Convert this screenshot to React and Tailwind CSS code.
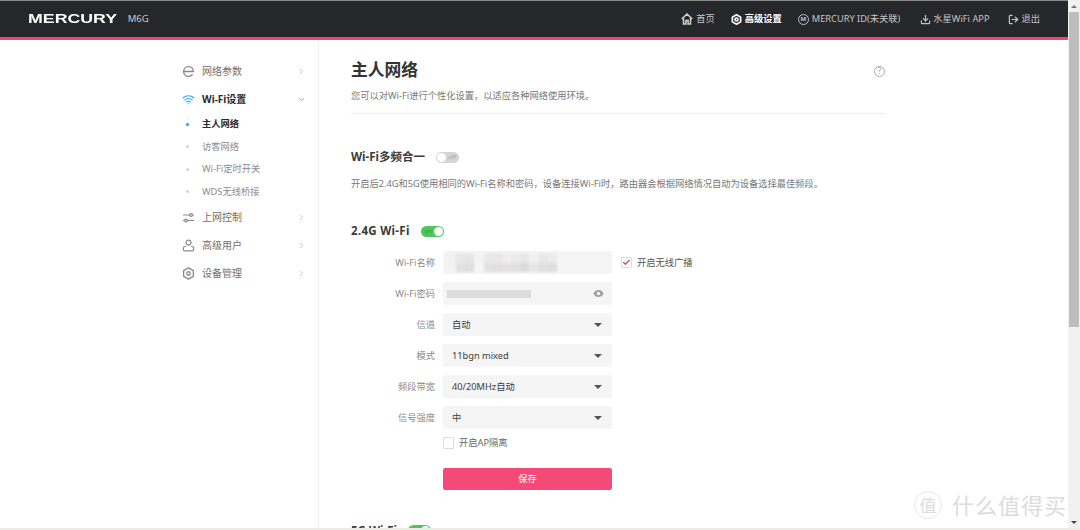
import React from 'react';
import { ChevronRight, ChevronDown, Wifi, Download, LogOut, Check } from 'lucide-react';

const font = { fontFamily: '"Noto Sans", "Noto Sans CJK SC", sans-serif' };

const E = () => (
  <svg width="13" height="13" viewBox="0 0 12 12" fill="none" stroke="#8a8a8a" strokeWidth="1.2">
    <path d="M1.5 6h9c0-2.6-2-4.5-4.5-4.5S1.5 3.4 1.5 6s2 4.5 4.5 4.5c1.6 0 3-.7 3.8-1.9" />
  </svg>
);

const Gear = ({ color = '#8a8a8a', size = 13, width = 1.2 }) => (
  <svg width={size} height={size} viewBox="0 0 12 12" fill="none" stroke={color} strokeWidth={width}>
    <path d="M6 .8 10.5 3.4v5.2L6 11.2 1.5 8.6V3.4z" strokeLinejoin="round" />
    <circle cx="6" cy="6" r="1.6" />
  </svg>
);

const Sliders = () => (
  <svg width="13" height="13" viewBox="0 0 13 13" fill="none" stroke="#8a8a8a" strokeWidth="1.2">
    <path d="M1 4h6.5M10.5 4H12M1 9.5h1.5M5.5 9.5H12" />
    <circle cx="9" cy="4" r="1.4" />
    <circle cx="4" cy="9.5" r="1.4" />
  </svg>
);

const Person = () => (
  <svg width="13" height="13" viewBox="0 0 13 13" fill="none" stroke="#8a8a8a" strokeWidth="1.2">
    <circle cx="6.5" cy="3.6" r="2.5" />
    <path d="M4 7.5H3a1.6 1.6 0 0 0-1.6 1.6v1.4c0 .8.6 1.4 1.4 1.4h7.4c.8 0 1.4-.6 1.4-1.4V9.1A1.6 1.6 0 0 0 10 7.5H9" />
  </svg>
);

const HomeIcon = () => (
  <svg width="12" height="12" viewBox="0 0 12 12" fill="none" stroke="#d0d0d0" strokeWidth="1.5" className="mr-[3px]">
    <path d="M.8 6 6 1l5.2 5M2.5 5.2v5.8h2.4V7.6h2.2V11h2.4V5.2" />
  </svg>
);

const NavItem = ({ icon, label, active, open }) => (
  <div className="flex h-[28px] items-center">
    <div className="flex w-[20px] shrink-0 items-center">{icon}</div>
    <span className={active ? 'flex-1 text-[10px] font-bold text-[#2b2b2b]' : 'flex-1 text-[10px] text-[#6f6f6f]'}>{label}</span>
    {open ? <ChevronDown size={9} color="#8a8a8a" /> : <ChevronRight size={9} color="#b5b5b5" />}
  </div>
);

const SubItem = ({ label, active }) => (
  <div className="flex h-[22.5px] items-center">
    <div className="flex w-[20px] shrink-0 pl-[4px]">
      <span className={active ? 'h-[3px] w-[3px] rounded-full bg-[#1e9bf0]' : 'h-[3px] w-[3px] rounded-full bg-[#cfcfcf]'} />
    </div>
    <span className={active ? 'text-[9.25px] font-bold text-[#2b2b2b]' : 'text-[9.25px] text-[#8c8c8c]'}>{label}</span>
  </div>
);

const Row = ({ label, children, side }) => (
  <div className="flex h-[23px] items-center">
    <div className="w-[84px] shrink-0 text-right text-[9.25px] text-[#8a8a8a]">{label}</div>
    <div className="ml-[8px] flex h-[23px] w-[169px] shrink-0 items-center justify-between rounded-[2px] bg-[#f5f5f5] px-[9px] text-[9.25px] text-[#3c3c3c]">
      {children}
    </div>
    {side}
  </div>
);

const Caret = () => <span className="h-0 w-0 border-x-[4px] border-t-[4px] border-x-transparent border-t-[#555] mr-[1px]" />;

const Toggle = ({ on }) => (
  <div className={on ? 'flex h-[11px] w-[23px] items-center justify-between rounded-full bg-[#4fc45f] px-[1px] text-[6px] leading-none text-[#2f9a40]' : 'flex h-[11px] w-[23px] items-center justify-between rounded-full bg-[#d4d4d4] px-[1px] text-[6px] leading-none text-[#aaa]'}>
    {on ? <span className="pl-[3px]">on</span> : <span className="h-[9px] w-[9px] rounded-full bg-white" />}
    {on ? <span className="h-[9px] w-[9px] rounded-full bg-white" /> : <span className="pr-[2px]">off</span>}
  </div>
);

const Select = ({ label, value }) => (
  <Row label={label}>
    <span>{value}</span>
    <Caret />
  </Row>
);

const NameMosaic = () => (
  <div className="-ml-[5px] flex h-[19px] w-[110px] flex-wrap blur-[1px]">
    {['#f1f1f1', '#e8e8e8', '#e6e6e6', '#f3f3f3', '#e9e9e9', '#e8e8e8', '#eeeeee', '#eaeaea', '#e6e8ea', '#f0f0f0', '#e8e8e8', '#ececec',
      '#f3f3f3', '#e2e2e2', '#dedede', '#f5f5f5', '#e2e2e2', '#e0e0e0', '#e4e2de', '#e0e0e0', '#dcdcdc', '#e8e6e2', '#e0e0e0', '#dedede'].map((c, i) => (
      <span key={i} className="h-[9.5px] w-[9.16px]" style={{ backgroundColor: c }} />
    ))}
  </div>
);

export default function App() {
  return (
    <div className="relative flex h-[530px] w-[1080px] flex-col overflow-hidden bg-white" style={font}>
      <div className="flex min-h-0 flex-1">
        <div className="flex min-w-0 flex-1 flex-col">
          {/* top bar */}
          <header className="flex h-[40px] shrink-0 items-center border-t border-b-[3px] border-t-[#8a8a8a] border-b-[#f0476f] bg-[#26272b] pl-[28px] pr-[28px]">
            <span className="text-[12.5px] font-bold text-white" style={{ fontFamily: '"Liberation Sans", sans-serif', transform: 'scaleX(1.42)', transformOrigin: 'left' }}>MERCURY</span>
            <span className="ml-[37px] flex-1 text-[9.5px] text-[#c9c9c9]">M6G</span>
            <nav className="flex items-center text-[9.25px] text-[#c4c4c4]">
              <HomeIcon />
              <span>首页</span>
              <span className="ml-[16px] mr-[3px]"><Gear color="#fff" size={11} width={1.8} /></span>
              <span className="font-bold text-white">高级设置</span>
              <span className="ml-[16px] mr-[3px] flex h-[11px] w-[11px] items-center justify-center rounded-full border border-[#c4c4c4] text-[6px] font-bold leading-none">M</span>
              <span>MERCURY ID(未关联)</span>
              <Download size={11} strokeWidth={2.6} className="ml-[20px] mr-[2px]" />
              <span>水星WiFi APP</span>
              <LogOut size={11} strokeWidth={2.6} className="ml-[18px] mr-[3px]" />
              <span>退出</span>
            </nav>
          </header>

          <div className="flex min-h-0 flex-1">
            {/* left menu */}
            <aside className="w-[319px] shrink-0 border-r border-[#f1f1f1] pl-[182px] pr-[12px] pt-[17px]">
              <NavItem icon={<E />} label="网络参数" />
              <NavItem icon={<Wifi size={13} color="#2ea4f5" />} label="Wi-Fi设置" active open />
              <SubItem label="主人网络" active />
              <SubItem label="访客网络" />
              <SubItem label="Wi-Fi定时开关" />
              <SubItem label="WDS无线桥接" />
              <NavItem icon={<Sliders />} label="上网控制" />
              <NavItem icon={<Person />} label="高级用户" />
              <NavItem icon={<Gear />} label="设备管理" />
            </aside>

            {/* content */}
            <main className="min-w-0 flex-1 overflow-hidden pl-[32px]">
              <div className="w-[535px]">
                <div className="border-b border-[#f0f0f0] pb-[10px] pt-[18px]">
                  <div className="flex items-center justify-between">
                    <h1 className="text-[16.75px] font-bold leading-[24px] text-[#333]">主人网络</h1>
                    <span className="mr-[1px] mt-[2px] flex h-[11px] w-[11px] items-center justify-center rounded-full border border-[#aaa] text-[8px] leading-none text-[#999]">?</span>
                  </div>
                  <p className="mt-[7px] text-[9.25px] leading-[14px] text-[#777]">您可以对Wi-Fi进行个性化设置，以适应各种网络使用环境。</p>
                </div>

                <div className="mt-[36px] flex h-[14px] items-center gap-[11px]">
                  <h2 className="text-[11.5px] font-bold text-[#3a3a3a]">Wi-Fi多频合一</h2>
                  <Toggle />
                </div>
                <p className="mt-[13px] whitespace-nowrap text-[9.25px] leading-[14px] text-[#777]">开启后2.4G和5G使用相同的Wi-Fi名称和密码，设备连接Wi-Fi时，路由器会根据网络情况自动为设备选择最佳频段。</p>

                <div className="mt-[33px] flex h-[14px] items-center gap-[11px]">
                  <h2 className="text-[11.5px] font-bold tracking-[0.3px] text-[#3a3a3a]">2.4G Wi-Fi</h2>
                  <Toggle on />
                </div>

                <div className="mt-[13px] flex flex-col gap-[8px]">
                  <Row
                    label="Wi-Fi名称"
                    side={
                      <div className="ml-[9px] flex items-center gap-[5px] text-[9.25px] text-[#555]">
                        <span className="flex h-[11px] w-[11px] items-center justify-center rounded-[1px] border border-[#ddd]">
                          <Check size={9} color="#e8335f" strokeWidth={3} />
                        </span>
                        开启无线广播
                      </div>
                    }
                  >
                    <NameMosaic />
                  </Row>
                  <Row label="Wi-Fi密码">
                    <span className="-ml-[5px] h-[8px] w-[84px] bg-[#dcdcdc] blur-[0.5px]" />
                    <svg width="11" height="9" viewBox="0 0 11 9" fill="#a0a0a0" className="mr-[-1px]">
                      <path d="M5.5 1C3 1 1.2 2.8.4 4.5 1.2 6.2 3 8 5.5 8s4.3-1.8 5.100-3.500C9.800 2.800 8 1 5.500 1zm0 5.300a1.800 1.800 0 1 1 0-3.600 1.800 1.800 0 0 1 0 3.600z" />
                    </svg>
                  </Row>
                  <Select label="信道" value="自动" />
                  <Select label="模式" value="11bgn mixed" />
                  <Select label="频段带宽" value="40/20MHz自动" />
                  <Select label="信号强度" value="中" />
                </div>

                <div className="ml-[92px] mt-[7px] flex items-center gap-[5px] text-[9.25px] text-[#666]">
                  <span className="h-[12px] w-[11px] rounded-[1px] border border-[#ddd]" />
                  开启AP隔离
                </div>
                <button className="ml-[92px] mt-[18px] block h-[22px] w-[169px] rounded-[2px] bg-[#f54a77] text-[9.25px] text-white">保存</button>

                <div className="mt-[34px] flex h-[14px] items-center gap-[11px]">
                  <h2 className="text-[11.5px] font-bold text-[#3a3a3a]">5G Wi-Fi</h2>
                  <Toggle on />
                </div>
              </div>
            </main>
          </div>
        </div>

        {/* browser scrollbar */}
        <div className="flex w-[12px] shrink-0 flex-col bg-[#f1f1f1]">
          <div className="flex h-[12px] items-center justify-center">
            <span className="h-0 w-0 border-x-[3px] border-b-[3px] border-x-transparent border-b-[#777]" />
          </div>
          <div className="mx-[1px] h-[315px] bg-[#bdbdbd]" />
          <div className="flex-1" />
          <div className="flex h-[12px] items-center justify-center">
            <span className="h-0 w-0 border-x-[3px] border-t-[3px] border-x-transparent border-t-[#444]" />
          </div>
        </div>
      </div>
      <div className="h-[2px] shrink-0 bg-[#ecece4]" />

      {/* watermark */}
      <div className="absolute left-[914px] top-[491px] flex items-center text-[#dcdcdc]">
        <span className="flex h-[28px] w-[28px] items-center justify-center rounded-full border border-[#e8e8e8] text-[17px] leading-none">值</span>
        <span className="ml-[10px] whitespace-nowrap text-[22px] leading-none tracking-[1px]">什么值得买</span>
      </div>
    </div>
  );
}
